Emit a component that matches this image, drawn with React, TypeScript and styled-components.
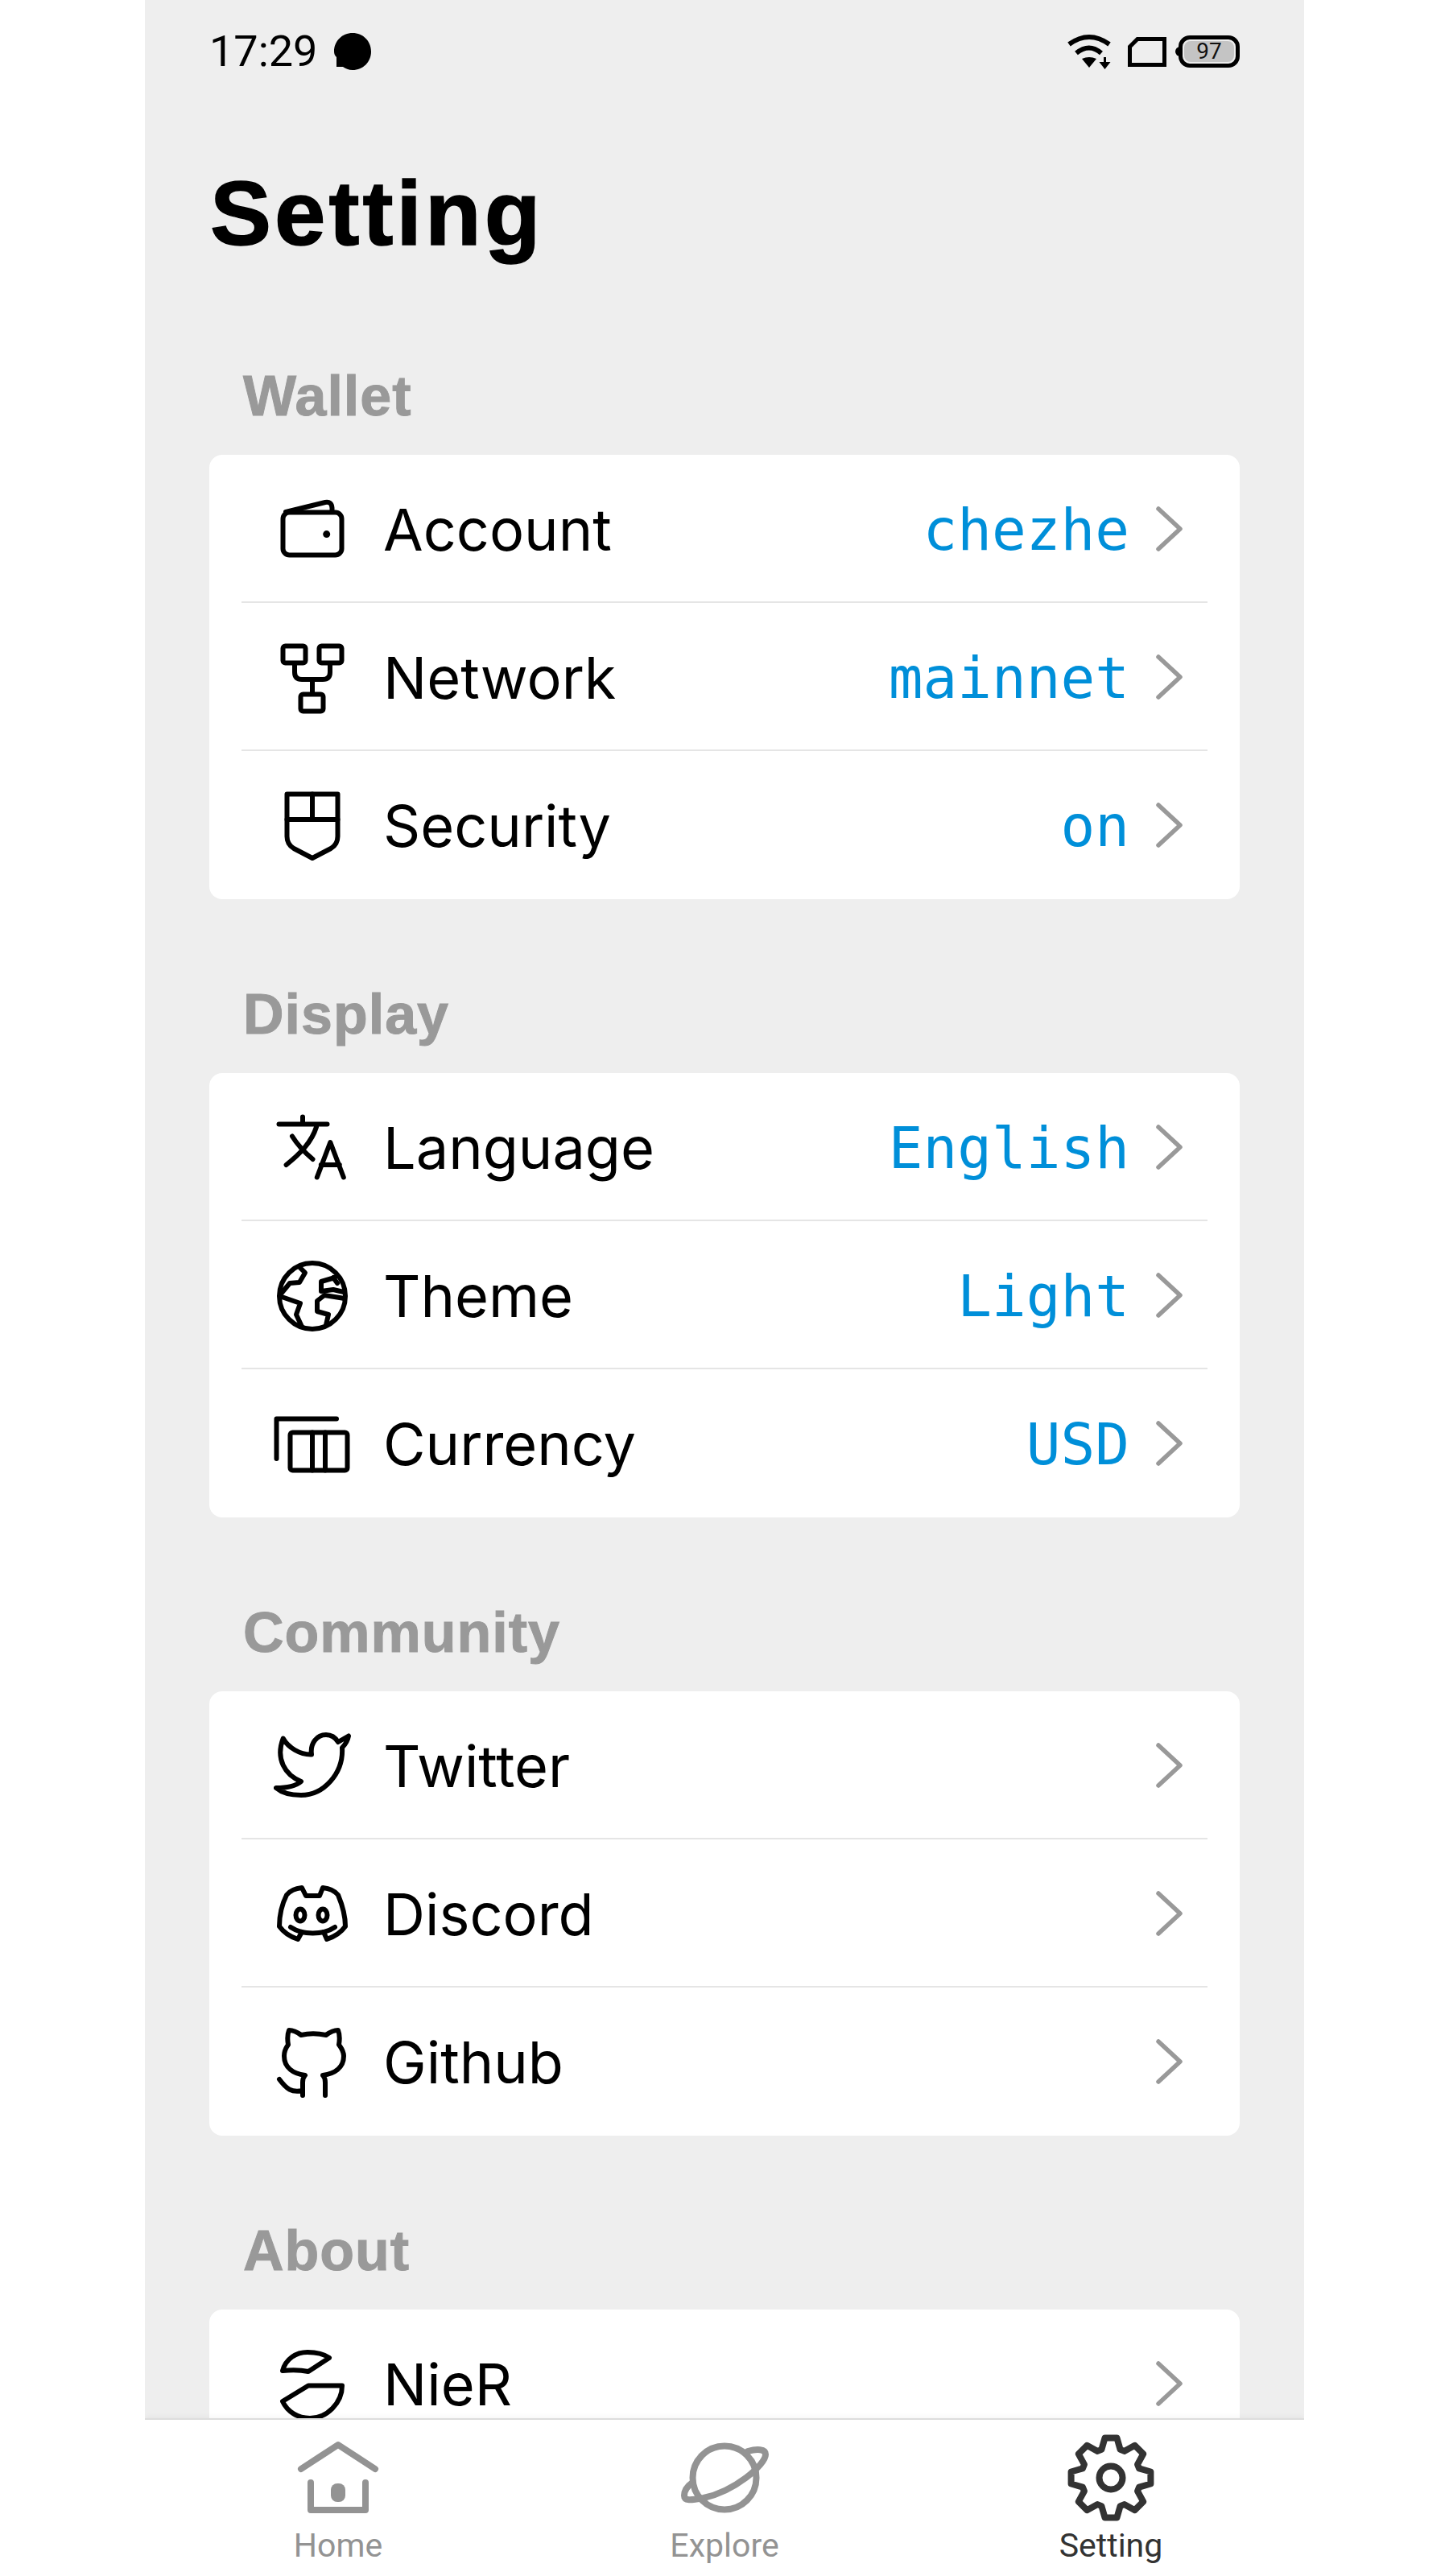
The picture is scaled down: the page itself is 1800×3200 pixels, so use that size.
import React from 'react';
import styled, { createGlobalStyle } from 'styled-components';

const GlobalStyle = createGlobalStyle`
    html, body {
        margin: 0;
        background: #fff;
    }
    * {
        box-sizing: border-box;
    }
`;

const Screen = styled.div`
    width: 1440px;
    height: 3200px;
    margin: 0 auto;
    background: #eee;
    display: flex;
    flex-direction: column;
    overflow: hidden;
`;

const Content = styled.div`
    flex: 1;
    min-height: 0;
    overflow: hidden;
`;

const StatusBar = styled.div`
    height: 128px;
    padding: 0 80px 0 80px;
    display: flex;
    align-items: center;
    justify-content: space-between;
`;

const StatusGroup = styled.div<{ $gap: number }>`
    display: flex;
    align-items: center;
    gap: ${props => props.$gap}px;
`;

const Time = styled.span`
    font-family: Roboto, sans-serif;
    font-size: 54px;
    line-height: 1;
    color: #000;
`;

const WifiIcon = styled.svg`
    margin-right: 9px;
`;

const Battery = styled.div`
    position: relative;
    width: 76px;
    height: 40px;
    margin-left: 3px;
    border: 5px solid #000;
    border-radius: 14px;
    padding: 2px;

    &::before {
        content: '';
        position: absolute;
        left: -9px;
        top: 9px;
        width: 6px;
        height: 12px;
        border-radius: 6px 0 0 6px;
        background: #000;
    }
`;

const BatteryLevel = styled.div`
    height: 100%;
    border-radius: 8px;
    background: #c4c4c4;
    display: flex;
    align-items: center;
    justify-content: center;
    font-family: Roboto, sans-serif;
    font-size: 28px;
    line-height: 1;
    color: #111;
`;

const PageTitle = styled.h1`
    margin: 57px 0 103px;
    padding-left: 81px;
    font-family: 'Liberation Sans', sans-serif;
    font-size: 114px;
    line-height: 160px;
    font-weight: 700;
    letter-spacing: 4px;
    -webkit-text-stroke: 1.5px #000;
    color: #000;
`;

const Section = styled.section`
    margin-bottom: 99px;
`;

const SectionTitle = styled.h2`
    margin: 0 0 29px;
    padding-left: 122px;
    font-family: 'Liberation Sans', sans-serif;
    font-size: 70px;
    line-height: 88px;
    font-weight: 700;
    letter-spacing: 1px;
    -webkit-text-stroke: 1px #999;
    color: #999;
`;

const Card = styled.div`
    margin: 0 80px;
    padding: 0 40px;
    background: #fff;
    border-radius: 16px;
`;

const Row = styled.div`
    height: 184px;
    padding: 2px 16px 0 40px;
    display: flex;
    align-items: center;
    border-bottom: 2px solid #e5e5e5;

    &:last-child {
        padding-top: 0;
        border-bottom: 0;
    }
`;

const RowIcon = styled.svg`
    width: 96px;
    height: 96px;
    flex: none;
    margin-right: 40px;
    fill: none;
    stroke: #000;
    stroke-width: 6;
    stroke-linecap: round;
    stroke-linejoin: round;
`;

const Label = styled.span`
    flex: 1;
    padding-top: 2px;
    font-family: Inter, sans-serif;
    font-size: 72px;
    line-height: 1;
    color: #000;
`;

const Value = styled.span`
    margin-right: 17px;
    padding-top: 2px;
    font-family: 'DejaVu Sans Mono', monospace;
    font-size: 71px;
    line-height: 1;
    color: #008fd9;
`;

const Chevron = styled.svg`
    width: 64px;
    height: 64px;
    flex: none;
    fill: none;
    stroke: #999;
    stroke-width: 5.5;
    stroke-linecap: round;
    stroke-linejoin: round;
`;

const TabBar = styled.nav`
    height: 196px;
    flex: none;
    position: relative;
    padding-top: 12px;
    display: grid;
    grid-template-columns: repeat(3, 1fr);
    background: #fff;
    border-top: 2px solid #ddd;
    box-shadow: 0 -2px 6px rgba(0, 0, 0, 0.04);
`;

const Tab = styled.div<{ $active?: boolean }>`
    display: flex;
    flex-direction: column;
    align-items: center;
    color: ${props => (props.$active ? '#333' : '#939393')};
`;

const TabIcon = styled.svg`
    width: 120px;
    height: 120px;
    fill: none;
    stroke: currentColor;
    stroke-width: 8;
    stroke-linecap: round;
    stroke-linejoin: round;
`;

const TabLabel = styled.span`
    margin-top: 2px;
    font-family: Roboto, sans-serif;
    font-size: 41px;
    line-height: 44px;
`;

const gearPath = () => {
    let d = '';
    for (let k = 0; k < 8; k++) {
        const a = (k * Math.PI) / 4 - Math.PI / 2;
        const pts: [number, number][] = [
            [a - 0.32, 37],
            [a - 0.15, 50],
            [a + 0.15, 50],
            [a + 0.32, 37],
        ];
        pts.forEach(([t, r], i) => {
            const x = (60 + r * Math.cos(t)).toFixed(1);
            const y = (60 + r * Math.sin(t)).toFixed(1);
            d += `${k === 0 && i === 0 ? 'M' : 'L'}${x} ${y}`;
        });
    }
    return d + 'Z';
};

const WalletIcon = () => (
    <RowIcon viewBox="0 0 96 96">
        <rect x="11.5" y="27.5" width="73" height="53" rx="8" />
        <path d="M15 27L64 15Q72 13.5 72.5 22V27" />
        <circle cx="65.7" cy="54.6" r="4.5" fill="#000" stroke="none" />
    </RowIcon>
);

const NetworkIcon = () => (
    <RowIcon viewBox="0 0 96 96">
        <rect x="11.5" y="9.5" width="28" height="21" rx="3" />
        <rect x="56.5" y="9.5" width="28" height="21" rx="3" />
        <rect x="33.5" y="69.5" width="28" height="21" rx="3" />
        <path d="M26 32V42Q26 51 35 51H61Q70 51 70 42V32M48 51V69" />
    </RowIcon>
);

const SecurityIcon = () => (
    <RowIcon viewBox="0 0 96 96">
        <path d="M16.5 9.5H79.5V62Q79.5 72 71 77L48 89L25 77Q16.5 72 16.5 62Z" />
        <path d="M48 9.5V41M16.5 41H79.5" />
    </RowIcon>
);

const LanguageIcon = () => (
    <RowIcon viewBox="0 0 96 96">
        <path d="M6.5 19.5H66.5M36 10.5V19.5" />
        <path d="M53 23C47 42 33 56 15.6 70M23 34.5C30 46 39 55 48.5 63" />
        <path d="M53.8 85.5L70.3 42L86.8 85.5M58.8 70H81.8" />
    </RowIcon>
);

const ThemeIcon = () => (
    <RowIcon viewBox="0 0 96 96">
        <circle cx="48" cy="49" r="41" />
        <path d="M33 14L39 20L32 32L20 33L10 45" />
        <path d="M10 50L33 58L28 72L35 87" />
        <path d="M76 26L59 31V43L74 41L87 44M74 26L79 33" />
        <path d="M88 52L63 48L54 55V68L68 72L65 85" />
    </RowIcon>
);

const CurrencyIcon = () => (
    <RowIcon viewBox="0 0 96 96">
        <path d="M3.5 67V17.5H78" />
        <rect x="20.5" y="34.5" width="71" height="47" rx="3" />
        <path d="M48 34.5V81.5M64 34.5V81.5" />
    </RowIcon>
);

const TwitterIcon = () => (
    <RowIcon viewBox="0 0 96 96">
        <path d="M11.7 14.5C18 26 33 35 47 34.5C45 20 54 10 65 10C72 10 77 14 80 19L93 11.5C92 17 89 22 85 26C87 58 62 85 34 85C21 85 10 82 3 76C14 76 26 75 34 68C14 60 2 40 11.7 14.5Z" />
    </RowIcon>
);

const DiscordIcon = () => (
    <RowIcon viewBox="0 0 96 96">
        <path d="M35 71L30 80C21 77 12 71 7 64C7 50 10 37 16 25C20 20 26 17 35 16L40 26H57L61 16C70 17 76 20 80 25C85 37 89 50 89 64C84 71 75 77 66 80L62 71" />
        <path d="M21 65C36 75 61 75 76 65" />
        <ellipse cx="33" cy="50" rx="5.5" ry="7.5" />
        <ellipse cx="61" cy="50" rx="5.5" ry="7.5" />
    </RowIcon>
);

const GithubIcon = () => (
    <RowIcon viewBox="0 0 96 96">
        <path d="M36 90V74C36 70 37 67 39 65C25 63 13 56 13 41C13 36 15 31 18 27C17 21 17 14 19 9C24 9 30 12 34 15C43 13 55 13 65 15C69 12 75 9 80 9C82 14 82 21 81 27C84 31 87 36 87 41C87 56 75 63 61 65C63 67 64 70 64 74V90" />
        <path d="M36 84C22 87 16 82 7 70" />
    </RowIcon>
);

const NierIcon = () => (
    <RowIcon viewBox="0 0 96 96">
        <path d="M11 32C15 17 28 9 42 9C52 9 62 11 69 16L43 33C33 31 22 31 11 32Z" />
        <path d="M11 70L43 50.5H85C85 72 66 91 45 91C30 91 17 83 11 70Z" />
    </RowIcon>
);

interface ISettingRow {
    label: string,
    value?: string,
    icon: React.ReactNode,
}

interface ISettingSection {
    title: string,
    rows: ISettingRow[],
}

const sections: ISettingSection[] = [
    {
        title: 'Wallet',
        rows: [
            { label: 'Account', value: 'chezhe', icon: <WalletIcon /> },
            { label: 'Network', value: 'mainnet', icon: <NetworkIcon /> },
            { label: 'Security', value: 'on', icon: <SecurityIcon /> },
        ],
    },
    {
        title: 'Display',
        rows: [
            { label: 'Language', value: 'English', icon: <LanguageIcon /> },
            { label: 'Theme', value: 'Light', icon: <ThemeIcon /> },
            { label: 'Currency', value: 'USD', icon: <CurrencyIcon /> },
        ],
    },
    {
        title: 'Community',
        rows: [
            { label: 'Twitter', icon: <TwitterIcon /> },
            { label: 'Discord', icon: <DiscordIcon /> },
            { label: 'Github', icon: <GithubIcon /> },
        ],
    },
    {
        title: 'About',
        rows: [
            { label: 'NieR', icon: <NierIcon /> },
        ],
    },
];

const App = () => {
    return (
        <Screen>
            <GlobalStyle />
            <Content>
                <StatusBar>
                    <StatusGroup $gap={21}>
                        <Time>17:29</Time>
                        <svg width="46" height="46" viewBox="0 0 46 46">
                            <path d="M23 0C36 0 46 10 46 23S36 46 23 46C18 46 14 44 11 42H3V30C1 28 0 26 0 23C0 10 10 0 23 0Z" />
                        </svg>
                    </StatusGroup>
                    <StatusGroup $gap={12}>
                        <WifiIcon width="55" height="44" viewBox="0 0 55 44">
                            <path d="M3 13Q28 -5 53 13M12 24Q28 11 43 24" fill="none" stroke="#000" strokeWidth="6" />
                            <path d="M19 31Q28 27 37 31L28 42Z" />
                            <path d="M46 29H49V35H54.5L47.5 44L40.5 35H46Z" />
                        </WifiIcon>
                        <svg width="48" height="37" viewBox="0 0 48 37">
                            <path d="M2.5 34.5V12L12 2.5H45.5V34.5Z" fill="none" stroke="#000" strokeWidth="5" />
                        </svg>
                        <Battery>
                            <BatteryLevel>97</BatteryLevel>
                        </Battery>
                    </StatusGroup>
                </StatusBar>
                <PageTitle>Setting</PageTitle>
                {sections.map(section => (
                    <Section key={section.title}>
                        <SectionTitle>{section.title}</SectionTitle>
                        <Card>
                            {section.rows.map(row => (
                                <Row key={row.label}>
                                    {row.icon}
                                    <Label>{row.label}</Label>
                                    {row.value && <Value>{row.value}</Value>}
                                    <Chevron viewBox="0 0 64 64">
                                        <path d="M19 7L46 32L19 57" />
                                    </Chevron>
                                </Row>
                            ))}
                        </Card>
                    </Section>
                ))}
            </Content>
            <TabBar>
                <Tab>
                    <TabIcon viewBox="0 0 120 120">
                        <path d="M14 49L60 19L106 49" />
                        <path d="M26 66V100H94V66" />
                        <rect x="51" y="67" width="18" height="23" rx="8" fill="currentColor" stroke="none" />
                    </TabIcon>
                    <TabLabel>Home</TabLabel>
                </Tab>
                <Tab>
                    <TabIcon viewBox="0 0 120 120">
                        <circle cx="60" cy="60" r="39.5" />
                        <path d="M89 27C100 24 111 24 111 31C111 44 72 77 34 85C18 88 10 89 10 82C10 77 13 71 20 66" />
                    </TabIcon>
                    <TabLabel>Explore</TabLabel>
                </Tab>
                <Tab $active>
                    <TabIcon viewBox="0 0 120 120">
                        <path d={gearPath()} />
                        <circle cx="60" cy="60" r="14.5" />
                    </TabIcon>
                    <TabLabel>Setting</TabLabel>
                </Tab>
            </TabBar>
        </Screen>
    );
};

export default App;
